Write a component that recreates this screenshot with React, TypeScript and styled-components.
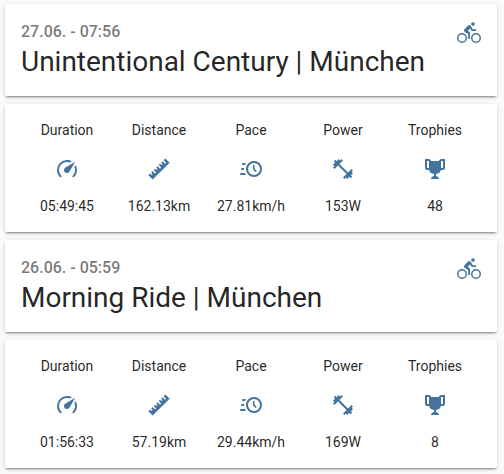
import React from "react";
import styled, { createGlobalStyle } from "styled-components";

const GlobalStyle = createGlobalStyle`
  body { margin: 0; background: #fafafa; font-family: Roboto, sans-serif; color: rgba(0,0,0,.87); -webkit-font-smoothing: antialiased; }
  *, *::before, *::after { box-sizing: border-box; }
`;

const Feed = styled.main`
  width: 504px;
  height: 474px;
  padding: 4px 7px 0 5px;
  overflow: hidden;
`;

const Card = styled.section`
  background: #fff;
  border-radius: 2px;
  margin-bottom: 8px;
  box-shadow: 0 3px 1px -2px rgba(0,0,0,.2), 0 2px 2px 0 rgba(0,0,0,.14), 0 1px 5px 0 rgba(0,0,0,.12);
`;

const TitleCard = styled(Card)`
  height: 92px;
  padding: 16px;
  display: flex;
  justify-content: space-between;
`;

const Timestamp = styled.div`
  font-size: 16px;
  line-height: 24px;
  font-weight: 500;
  color: rgba(0,0,0,.54);
`;

const Title = styled.h1`
  margin: 0;
  font-size: 28px;
  line-height: 36px;
  font-weight: 400;
  letter-spacing: -0.01px;
  white-space: nowrap;
`;

const StatsCard = styled(Card)`
  height: 128px;
  padding: 16px;
  display: grid;
  grid-template-columns: repeat(5, 92px);
`;

const Stat = styled.div`
  display: flex;
  flex-direction: column;
  align-items: center;
  font-size: 14px;
  line-height: 20px;
`;

const Glyph = styled.svg`
  width: 24px;
  height: 24px;
  fill: #44739e;
`;

const StatGlyph = styled(Glyph)`
  margin: 17px 0 15px;
`;

const BikeGlyph = styled(Glyph)`
  margin-top: 1px;
`;

const bikePath =
  "M5,20.5A3.5,3.5 0 0,1 1.5,17A3.5,3.5 0 0,1 5,13.5A3.5,3.5 0 0,1 8.5,17A3.5,3.5 0 0,1 5,20.5M5,12A5,5 0 0,0 0,17A5,5 0 0,0 5,22A5,5 0 0,0 10,17A5,5 0 0,0 5,12M14.8,10H19V8.2H15.8L13.86,4.93C13.57,4.43 13,4.1 12.4,4.1C11.93,4.1 11.5,4.29 11.2,4.6L7.5,8.29C7.19,8.6 7,9 7,9.5C7,10.13 7.33,10.66 7.85,10.97L11.2,13V18H13V11.5L10.75,9.85L13.07,7.5M19,20.5A3.5,3.5 0 0,1 15.5,17A3.5,3.5 0 0,1 19,13.5A3.5,3.5 0 0,1 22.5,17A3.5,3.5 0 0,1 19,20.5M19,12A5,5 0 0,0 14,17A5,5 0 0,0 19,22A5,5 0 0,0 24,17A5,5 0 0,0 19,12M16,4.8C17,4.8 17.8,4 17.8,3C17.8,2 17,1.2 16,1.2C15,1.2 14.2,2 14.2,3C14.2,4 15,4.8 16,4.8Z";

const icons: Record<string, string> = {
  Duration: "M12,16A3,3 0 0,1 9,13C9,11.88 9.61,10.9 10.5,10.39L20.21,4.77L14.68,14.35C14.18,15.33 13.17,16 12,16M12,3C13.81,3 15.5,3.5 16.97,4.32L14.87,5.53C14,5.19 13,5 12,5A8,8 0 0,0 4,13C4,15.21 4.89,17.21 6.34,18.65H6.35C6.74,19.04 6.74,19.67 6.35,20.06C5.96,20.45 5.32,20.45 4.93,20.07V20.07C3.12,18.26 2,15.76 2,13A10,10 0 0,1 12,3M22,13C22,15.76 20.88,18.26 19.07,20.07V20.07C18.68,20.45 18.05,20.45 17.66,20.06C17.27,19.67 17.27,19.04 17.66,18.65V18.65C19.11,17.2 20,15.21 20,13C20,12 19.81,11 19.46,10.1L20.67,8C21.5,9.5 22,11.18 22,13Z",
  Distance: "M1.39,18.36L3.16,16.6L4.58,18L5.64,16.95L4.22,15.54L5.64,14.12L8.11,16.6L9.17,15.54L6.7,13.06L8.11,11.65L9.53,13.06L10.59,12L9.17,10.59L10.59,9.17L13.06,11.65L14.12,10.59L11.65,8.11L13.06,6.7L14.47,8.11L15.54,7.05L14.12,5.64L15.54,4.22L18,6.7L19.07,5.64L16.6,3.16L18.36,1.39L22.61,5.64L5.64,22.61L1.39,18.36Z",
  Pace: "M15,4A8,8 0 0,1 23,12A8,8 0 0,1 15,20A8,8 0 0,1 7,12A8,8 0 0,1 15,4M15,6A6,6 0 0,0 9,12A6,6 0 0,0 15,18A6,6 0 0,0 21,12A6,6 0 0,0 15,6M14,8H15.5V11.78L17.83,14.11L16.77,15.17L14,12.4V8M2,18A1,1 0 0,1 1,17A1,1 0 0,1 2,16H5.83C6.14,16.71 6.54,17.38 7,18H2M3,13A1,1 0 0,1 2,12A1,1 0 0,1 3,11H5.05L5,12L5.05,13H3M4,8A1,1 0 0,1 3,7A1,1 0 0,1 4,6H7C6.54,6.62 6.14,7.29 5.83,8H4Z",
  Power: "M20.57,14.86L22,13.43L20.57,12L17,15.57L8.43,7L12,3.43L10.57,2L9.14,3.43L7.71,2L5.57,4.14L4.14,2.71L2.71,4.14L4.14,5.57L2,7.71L3.43,9.14L2,10.57L3.43,12L7,8.43L15.57,17L12,20.57L13.43,22L14.86,20.57L16.29,22L18.43,19.86L19.86,21.29L21.29,19.86L19.86,18.43L22,16.29L20.57,14.86Z",
  Trophies: "M20.2,2H19.5H18C17.1,2 16,3 16,4H8C8,3 6.9,2 6,2H4.5H3.8H2V11C2,12 3,13 4,13H6.2C6.6,15 7.9,16.7 11,17V19.08C8,19.54 8,22 8,22H16C16,22 16,19.54 13,19.08V17C16.1,16.7 17.4,15 17.8,13H20C21,13 22,12 22,11V2H20.2M4,11V4H6V6V11C5.1,11 4.3,11 4,11M20,11C19.7,11 18.9,11 18,11V6V4H20V11Z",
};

const activities = [
  { time: "27.06. - 07:56", title: "Unintentional Century | München", stats: { Duration: "05:49:45", Distance: "162.13km", Pace: "27.81km/h", Power: "153W", Trophies: "48" } },
  { time: "26.06. - 05:59", title: "Morning Ride | München", stats: { Duration: "01:56:33", Distance: "57.19km", Pace: "29.44km/h", Power: "169W", Trophies: "8" } },
];

export default function App() {
  return (
    <>
      <GlobalStyle />
      <Feed>
        {activities.map((activity) => (
          <React.Fragment key={activity.time}>
            <TitleCard>
              <header>
                <Timestamp>{activity.time}</Timestamp>
                <Title>{activity.title}</Title>
              </header>
              <BikeGlyph viewBox="0 0 24 24"><path d={bikePath} /></BikeGlyph>
            </TitleCard>
            <StatsCard>
              {Object.entries(activity.stats).map(([label, value]) => (
                <Stat key={label}>
                  <span>{label}</span>
                  <StatGlyph viewBox="0 0 24 24"><path d={icons[label]} /></StatGlyph>
                  <span>{value}</span>
                </Stat>
              ))}
            </StatsCard>
          </React.Fragment>
        ))}
      </Feed>
    </>
  );
}
